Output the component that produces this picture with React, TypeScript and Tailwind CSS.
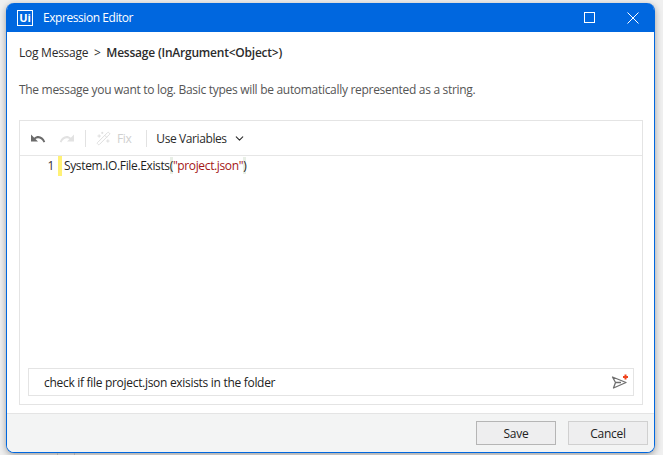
import { ChevronDown, WandSparkles } from "lucide-react";

const font = "font-['Open_Sans','Noto_Sans',sans-serif]";

function TitleBar() {
  return (
    <div className="flex items-center h-[29px] bg-[#0067df] rounded-t-[7px] text-white shrink-0">
      <div className="ml-[10px] w-[16px] h-[16px] border-[1.5px] border-white flex items-center justify-center text-[11px] font-bold leading-none">
        Ui
      </div>
      <span className="ml-[10px] text-[12px] tracking-[-0.44px]">Expression Editor</span>
      <div className="ml-auto flex items-center gap-[32px] mr-[15px]">
        <div className="w-[11px] h-[11px] border border-white" />
        <svg width="12" height="12" viewBox="0 0 12 12" fill="none">
          <path d="M0.5 0.5 L11.5 11.5 M11.5 0.5 L0.5 11.5" stroke="#ffffff" strokeWidth="1" />
        </svg>
      </div>
    </div>
  );
}

function UndoIcon({ color, flip }: { color: string; flip?: boolean }) {
  return (
    <svg width="16" height="11" viewBox="0 0 16 11" fill={color} className={flip ? "-scale-x-100" : ""}>
      <path d="M1 1.5 V8.5 H8 L5.5 6 C8 4.6 11.5 5.2 13.6 9.5 L15.2 8.8 C13.2 3 7.8 1.2 4.2 4.7 Z" />
    </svg>
  );
}

function Toolbar() {
  return (
    <div className="flex items-center h-[35px] border-b border-[#e6e6e6] shrink-0 text-[12px] tracking-[-0.4px]">
      <div className="ml-[10px]">
        <UndoIcon color="#6b6b6b" />
      </div>
      <div className="ml-[13px]">
        <UndoIcon color="#e2e2e2" flip />
      </div>
      <div className="ml-[10px] w-px h-[17px] bg-[#e2e2e2]" />
      <WandSparkles className="ml-[10px] w-[15px] h-[15px] text-[#dcdcdc]" strokeWidth={1.5} />
      <span className="ml-[6px] pt-[1px] text-[#d0d0d0]">Fix</span>
      <div className="ml-[15px] w-px h-[17px] bg-[#e2e2e2]" />
      <span className="ml-[9px] pt-[1px] text-[#2b2b2b]">Use Variables</span>
      <ChevronDown className="ml-[6px] w-[13px] h-[13px] text-[#2b2b2b]" strokeWidth={2} />
    </div>
  );
}

function CodeLine() {
  return (
    <div className="flex items-stretch h-[20px] text-[12px] tracking-[-0.36px] leading-[20px]">
      <span className="w-[34px] text-right text-[#333333]">1</span>
      <div className="ml-[4px] w-[4px] bg-[#fff176]" />
      <div className="ml-[2px] text-[#1f1f1f]">
        System.IO.File.Exists<span className="bg-[#e8efe6]">(</span>
        <span className="text-[#a31515]">"project.json"</span>
        <span className="bg-[#e8efe6]">)</span>
      </div>
    </div>
  );
}

function PromptBox() {
  return (
    <div className="flex items-center h-[28px] mx-[8px] mb-[8px] border border-[#e4e4e4] pl-[15px] pr-[4px] shrink-0">
      <span className="pt-[1px] text-[12px] tracking-[-0.3px] text-[#222222]">check if file project.json exisists in the folder</span>
      <svg className="ml-auto" width="18" height="16" viewBox="0 0 18 16" fill="none">
        <path d="M1.5 3 L15 8.5 L2.5 14 L4.5 8.5 Z M4.5 8.5 H10" stroke="#6f6f6f" strokeWidth="1.3" strokeLinejoin="round" />
        <path d="M13.5 0.5 h2 v1.5 h1.5 v2 h-1.5 v1.5 h-2 v-1.5 h-1.5 v-2 h1.5 Z" fill="#f0451f" />
      </svg>
    </div>
  );
}

export default function App() {
  return (
    <div className={`relative w-[663px] h-[455px] bg-[#f0f0f0] pt-[3px] pl-[6px] overflow-hidden ${font}`}>
      <div className="flex flex-col w-[649px] h-[450px] bg-white rounded-[8px] border border-t-0 border-[#0067df] shadow-[0_2px_7px_rgba(0,0,0,0.35)]">
        <TitleBar />
        <div className="flex-1 flex flex-col min-h-0">
          <div className="pl-[12px] pt-[12px] text-[12px] leading-[18px] tracking-[-0.25px] text-[#2b2b2b]">
            Log Message&nbsp; &gt;&nbsp; <span className="font-semibold tracking-[-0.22px]">Message (InArgument&lt;Object&gt;)</span>
          </div>
          <div className="pl-[12px] pt-[19px] text-[12px] leading-[18px] tracking-[-0.3px] text-[#555555]">
            The message you want to log. Basic types will be automatically represented as a string.
          </div>
          <div className="flex-1 flex flex-col min-h-0 mt-[21px] ml-[12px] mr-[11px] mb-[8px] border border-[#e4e4e4]">
            <Toolbar />
            <div className="flex-1 min-h-0">
              <CodeLine />
            </div>
            <PromptBox />
          </div>
        </div>
        <div className="flex items-center justify-end gap-[12px] h-[39px] pr-[6px] bg-[#f3f4f4] border-t border-[#e4e4e4] rounded-b-[7px] shrink-0">
          <button className="w-[80px] h-[24px] pt-[1px] bg-[#eeeeef] border border-[#b5b5b5] text-[12px] text-[#222222] tracking-[-0.25px]">Save</button>
          <button className="w-[80px] h-[24px] pt-[1px] bg-[#eeeeef] border border-[#d0d0d0] text-[12px] text-[#222222] tracking-[-0.25px]">Cancel</button>
        </div>
      </div>
      <div className="absolute left-[57px] bottom-0 w-px h-[2px] bg-[#a8a8a8]" />
      <div className="absolute left-[74px] bottom-0 w-px h-[2px] bg-[#a8a8a8]" />
    </div>
  );
}
